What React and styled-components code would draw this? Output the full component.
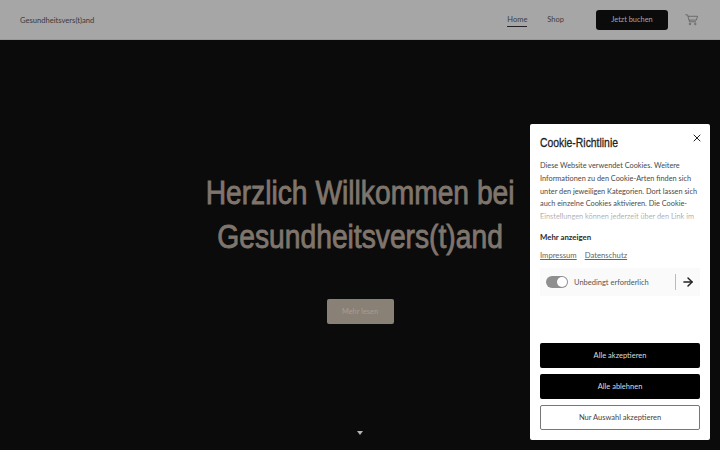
import React from "react";
import styled, { createGlobalStyle } from "styled-components";
import { X, ArrowRight } from "lucide-react";

const Global = createGlobalStyle`
  html, body { margin: 0; padding: 0; height: 100%; background: #0b0b0b; overflow: hidden; }
  * { box-sizing: border-box; }
  #root { height: 100%; }
`;

const Page = styled.div`
  width: 720px;
  height: 450px;
  display: flex;
  flex-direction: column;
  background: #0b0b0b;
  font-family: "Lato", "Liberation Sans", sans-serif;
  overflow: hidden;
  position: relative;
`;

const Header = styled.header`
  height: 40px;
  flex: none;
  display: flex;
  align-items: center;
  justify-content: space-between;
  padding: 0 22px 0 20px;
  background: #a6a6a6;
  border-bottom: 1px solid #989898;
`;

const Brand = styled.div`
  font-size: 7.6px;
  color: #3a3a3a;
`;

const Nav = styled.nav`
  display: flex;
  align-items: center;
`;

const NavLink = styled.a`
  font-size: 7.5px;
  line-height: 10px;
  color: #3e3e3e;
  margin-right: ${(p) => p.$gap}px;
  padding: 3px 0 1px;
  border-bottom: 1px solid ${(p) => (p.$active ? "#222" : "transparent")};
`;

const BookButton = styled.button`
  width: 72px;
  height: 20px;
  background: #0b0b0b;
  color: #a6a6a6;
  border: none;
  border-radius: 3px;
  font: inherit;
  font-size: 7.4px;
  margin-right: 17px;
  padding: 0;
`;

const Cart = styled.svg`
  width: 13px;
  height: 12px;
  display: block;
`;

const Hero = styled.main`
  flex: 1;
  display: flex;
  flex-direction: column;
  align-items: center;
  padding-top: 130px;
`;

const Title = styled.h1`
  margin: 0;
  text-align: center;
  white-space: nowrap;
  font-family: "Liberation Sans", sans-serif;
  font-weight: 400;
  font-size: 34px;
  line-height: 44px;
  color: #7f756c;
  -webkit-text-stroke: 0.9px #7f756c;
  transform: scaleX(0.83);
`;

const MoreButton = styled.button`
  margin-top: 41px;
  width: 67px;
  height: 25px;
  padding: 0;
  background: #8a8176;
  color: #a69e94;
  border: none;
  border-radius: 2px;
  font: inherit;
  font-size: 7.4px;
`;

const Caret = styled.div`
  margin-top: 107px;
  width: 0;
  height: 0;
  border-left: 3.5px solid transparent;
  border-right: 3.5px solid transparent;
  border-top: 4px solid #b5b5b5;
`;

const Panel = styled.aside`
  position: absolute;
  left: 530px;
  top: 124px;
  width: 180px;
  height: 316px;
  background: #fff;
  border-radius: 2px;
  padding: 10px;
  display: flex;
  flex-direction: column;
`;

const PanelHead = styled.div`
  display: flex;
  justify-content: space-between;
  align-items: flex-start;
  height: 26px;
`;

const PanelTitle = styled.h2`
  margin: 0;
  font-family: "Liberation Sans", sans-serif;
  font-weight: 400;
  font-size: 13.5px;
  line-height: 18px;
  color: #222;
  white-space: nowrap;
  -webkit-text-stroke: 0.3px #222;
  transform: scaleX(0.77);
  transform-origin: left center;
`;

const Close = styled.button`
  border: none;
  background: none;
  padding: 0;
  color: #222;
  display: flex;
  margin: -2px -3px 0 0;
`;

const Body = styled.div`
  position: relative;
  height: 64px;
  overflow: hidden;
  font-size: 7.35px;
  line-height: 12.8px;
  color: #4a4a4a;
  &::after {
    content: "";
    position: absolute;
    left: 0;
    right: 0;
    bottom: 0;
    height: 20px;
    background: linear-gradient(rgba(255,255,255,0), rgba(255,255,255,0.9));
  }
`;

const More = styled.div`
  margin-top: 7px;
  font-size: 7.8px;
  font-weight: 700;
  line-height: 12px;
  color: #2a2a2a;
`;

const Links = styled.div`
  display: flex;
  gap: 8px;
  margin-top: 6px;
  font-size: 7.7px;
  line-height: 12px;
  color: #666;
`;

const LegalLink = styled.a`
  text-decoration: underline;
`;

const ConsentRow = styled.div`
  margin-top: 7px;
  height: 28px;
  background: #fafafa;
  display: flex;
  align-items: center;
  padding: 0 5px 0 6px;
`;

const Toggle = styled.div`
  width: 22px;
  height: 12px;
  border-radius: 6px;
  background: #8f8f8f;
  position: relative;
  flex: none;
  &::after {
    content: "";
    position: absolute;
    right: 1px;
    top: 1px;
    width: 10px;
    height: 10px;
    border-radius: 50%;
    background: #fff;
  }
`;

const ConsentLabel = styled.span`
  flex: 1;
  margin-left: 6px;
  font-size: 7.5px;
  color: #555;
`;

const Divider = styled.span`
  width: 1px;
  height: 16px;
  background: #bbb;
  margin-right: 5px;
`;

const Actions = styled.div`
  margin-top: auto;
  display: flex;
  flex-direction: column;
  gap: 6px;
`;

const Action = styled.button`
  height: 25px;
  padding: 0;
  border-radius: 2px;
  font: inherit;
  font-size: 7.5px;
  background: ${(p) => (p.$outline ? "#fff" : "#000")};
  color: ${(p) => (p.$outline ? "#444" : "#ddd")};
  border: ${(p) => (p.$outline ? "1px solid #777" : "none")};
`;

export default function App() {
  return (
    <Page>
      <Global />
      <Header>
        <Brand>Gesundheitsvers(t)and</Brand>
        <Nav>
          <NavLink $active $gap={20}>Home</NavLink>
          <NavLink $gap={32}>Shop</NavLink>
          <BookButton>Jetzt buchen</BookButton>
          <Cart viewBox="0 0 13 12" fill="none" stroke="#555" strokeWidth="0.7">
            <path d="M0.3 0.8h2.2l2 7h6.5" />
            <path d="M3 2.3h9.6l-1.3 3.8H4.1" />
            <circle cx="5" cy="10" r="0.8" />
            <circle cx="10.3" cy="10" r="0.8" />
          </Cart>
        </Nav>
      </Header>
      <Hero>
        <Title>Herzlich Willkommen bei<br />Gesundheitsvers(t)and</Title>
        <MoreButton>Mehr lesen</MoreButton>
        <Caret />
      </Hero>
      <Panel>
        <PanelHead>
          <PanelTitle>Cookie-Richtlinie</PanelTitle>
          <Close><X size={12} strokeWidth={2} /></Close>
        </PanelHead>
        <Body>
          Diese Website verwendet Cookies. Weitere Informationen zu den Cookie-Arten finden sich unter den jeweiligen Kategorien. Dort lassen sich auch einzelne Cookies aktivieren. Die Cookie-Einstellungen können jederzeit über den Link im
        </Body>
        <More>Mehr anzeigen</More>
        <Links>
          <LegalLink>Impressum</LegalLink>
          <LegalLink>Datenschutz</LegalLink>
        </Links>
        <ConsentRow>
          <Toggle />
          <ConsentLabel>Unbedingt erforderlich</ConsentLabel>
          <Divider />
          <ArrowRight size={14} color="#222" strokeWidth={2.5} />
        </ConsentRow>
        <Actions>
          <Action>Alle akzeptieren</Action>
          <Action>Alle ablehnen</Action>
          <Action $outline>Nur Auswahl akzeptieren</Action>
        </Actions>
      </Panel>
    </Page>
  );
}
